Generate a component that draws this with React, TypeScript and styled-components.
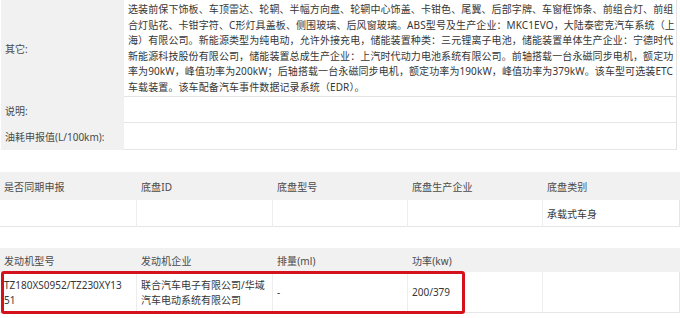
import React from "react";
import styled, { createGlobalStyle } from "styled-components";

const GlobalStyle = createGlobalStyle`
  html, body { margin: 0; padding: 0; background: #ffffff; }
  body {
    font-family: "Noto Sans", "Noto Sans CJK SC", sans-serif;
    font-size: 10px;
    color: #363636;
  }
`;

const Page = styled.div`
  width: 680px;
  height: 318px;
  overflow: hidden;
  display: flex;
  flex-direction: column;
  background: #fff;
`;

const InfoTable = styled.div`
  width: 675px;
  margin-left: 1px;
  border-right: 1px solid #e3e3e3;
  display: flex;
  flex-direction: column;
`;

const InfoRow = styled.div<{ $h: number }>`
  display: grid;
  grid-template-columns: 123px 1fr;
  height: ${(p) => p.$h}px;
`;

const InfoLabel = styled.div`
  background: #f1f1f1;
  padding-left: 4px;
  display: flex;
  align-items: center;
  color: #4a4a4a;
  white-space: nowrap;
`;

const InfoValue = styled.div<{ $top?: number }>`
  padding: ${(p) => p.$top ?? 0}px 0 0 4px;
  border-bottom: 1px solid #e5e5e5;
  overflow: visible;
`;

const TextLine = styled.div`
  line-height: 15.5px;
  white-space: nowrap;
  letter-spacing: 0.1px;
`;

const Gap = styled.div<{ $h: number }>`
  height: ${(p) => p.$h}px;
  flex: none;
`;

const SpecGrid = styled.div`
  display: grid;
  grid-template-columns: 137px 136px 135px 135px 1fr;
  width: 680px;
`;

const HeadCell = styled.div<{ $h: number }>`
  height: ${(p) => p.$h}px;
  background: #f1f1f1;
  padding-left: 4px;
  display: flex;
  align-items: center;
  color: #4a4a4a;
  white-space: nowrap;
  letter-spacing: 0.1px;
`;

const DataCell = styled.div<{ $h: number; $last?: boolean }>`
  height: ${(p) => p.$h}px;
  box-sizing: border-box;
  padding-left: 4px;
  border-bottom: 1px solid #e6e6e6;
  border-right: 1px solid ${(p) => (p.$last ? "#e6e6e6" : "#ededed")};
  display: flex;
  align-items: center;
  color: #363636;
  white-space: nowrap;
  position: relative;
`;

const CellText = styled.div`
  line-height: 15px;
  padding-top: 2px;
`;

const Highlight = styled.div`
  position: absolute;
  left: 1px;
  top: -1px;
  width: 464px;
  height: 43px;
  box-sizing: border-box;
  border: 3px solid #d3121b;
  border-radius: 3px;
  pointer-events: none;
`;

const RowWrap = styled.div`
  position: relative;
  grid-column: 1 / -1;
  display: grid;
  grid-template-columns: 137px 136px 135px 135px 1fr;
`;

const otherLines = [
  "选装前保下饰板、车顶雷达、轮辋、半幅方向盘、轮辋中心饰盖、卡钳色、尾翼、后部字牌、车窗框饰条、前组合灯、前组",
  "合灯贴花、卡钳字符、C形灯具盖板、侧围玻璃、后风窗玻璃。ABS型号及生产企业：MKC1EVO，大陆泰密克汽车系统（上",
  "海）有限公司。新能源类型为纯电动，允许外接充电，储能装置种类：三元锂离子电池，储能装置单体生产企业：宁德时代",
  "新能源科技股份有限公司，储能装置总成生产企业：上汽时代动力电池系统有限公司。前轴搭载一台永磁同步电机，额定功",
  "率为90kW，峰值功率为200kW；后轴搭载一台永磁同步电机，额定功率为190kW，峰值功率为379kW。该车型可选装ETC",
  "车载装置。该车配备汽车事件数据记录系统（EDR）。",
];

const chassisHeads = ["是否同期申报", "底盘ID", "底盘型号", "底盘生产企业", "底盘类别"];
const chassisData = ["", "", "", "", "承载式车身"];
const engineHeads = ["发动机型号", "发动机企业", "排量(ml)", "功率(kw)", ""];

export default function App() {
  return (
    <>
      <GlobalStyle />
      <Page>
        <InfoTable>
          <InfoRow $h={97}>
            <InfoLabel>其它:</InfoLabel>
            <InfoValue $top={2}>
              {otherLines.map((l, i) => (
                <TextLine key={i}>{l}</TextLine>
              ))}
            </InfoValue>
          </InfoRow>
          <InfoRow $h={26}>
            <InfoLabel>说明:</InfoLabel>
            <InfoValue />
          </InfoRow>
          <InfoRow $h={27}>
            <InfoLabel>油耗申报值(L/100km):</InfoLabel>
            <InfoValue />
          </InfoRow>
        </InfoTable>

        <Gap $h={22} />

        <SpecGrid>
          {chassisHeads.map((h) => (
            <HeadCell key={h} $h={28}>{h}</HeadCell>
          ))}
          {chassisData.map((d, i) => (
            <DataCell key={i} $h={27} $last={i === 4}>{d}</DataCell>
          ))}
        </SpecGrid>

        <Gap $h={21} />

        <SpecGrid>
          {engineHeads.map((h, i) => (
            <HeadCell key={i} $h={24}>{h}</HeadCell>
          ))}
          <RowWrap>
            <DataCell $h={41}>
              <CellText>
                TZ180XS0952/TZ230XY13
                <br />
                51
              </CellText>
            </DataCell>
            <DataCell $h={41}>
              <CellText>
                联合汽车电子有限公司/华域
                <br />
                汽车电动系统有限公司
              </CellText>
            </DataCell>
            <DataCell $h={41}>-</DataCell>
            <DataCell $h={41}>200/379</DataCell>
            <DataCell $h={41} $last />
            <Highlight />
          </RowWrap>
        </SpecGrid>
      </Page>
    </>
  );
}
